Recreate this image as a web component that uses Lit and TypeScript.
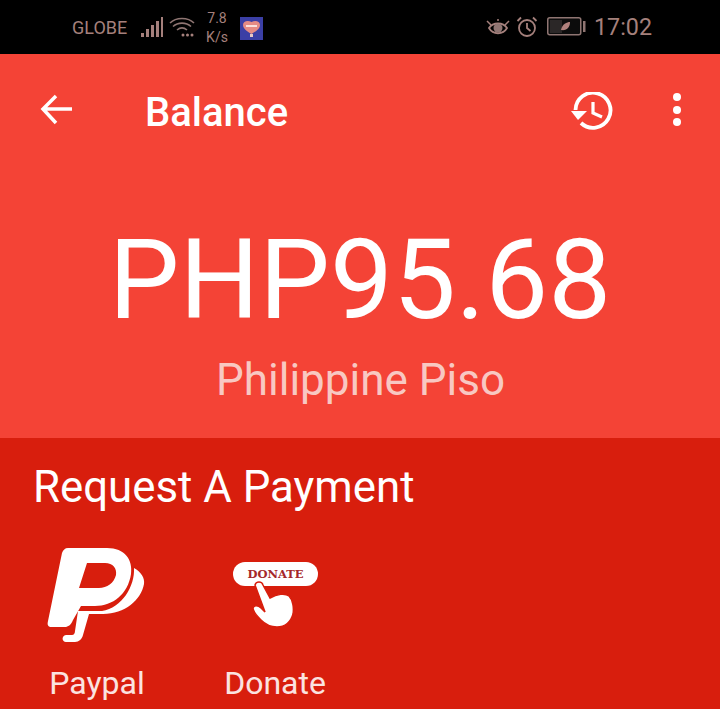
import { LitElement, html, css } from "lit";
import { customElement } from "lit/decorators.js";

@customElement("app-root")
export class AppRoot extends LitElement {
  static styles = css`
    :host { display: block; width: 720px; height: 709px; overflow: hidden; font-family: Roboto, "Liberation Sans", sans-serif; background: #d81e0d; }
    .status { height: 54px; background: #000; color: #a5807c; display: flex; align-items: center; box-sizing: border-box; padding-left: 72px; font-size: 18px; }
    .carrier { width: 57px; }
    .signal { margin-left: 12px; }
    .wifi { margin-left: 5px; }
    .speed { margin-left: 9px; margin-top: 2px; width: 26px; font-size: 14px; line-height: 19px; text-align: center; }
    .app { margin-left: 10px; margin-top: 3px; }
    .right { margin-left: auto; display: flex; align-items: center; padding-right: 68px; }
    .alarm { margin-left: 6px; }
    .battery { margin-left: 9px; }
    .time { margin-left: 8px; font-size: 23.3px; }
    .top { background: #f44336; height: 384px; color: #fff; display: flex; flex-direction: column; }
    .toolbar { display: flex; align-items: center; height: 116px; padding: 0 36px 0 38px; }
    .toolbar h1 { margin: 0 0 0 71px; font-size: 40px; font-weight: 500; flex: 1; }
    .dots { margin-left: 56px; }
    .amount { text-align: center; font-size: 112px; line-height: 124px; margin-top: 48px; }
    .currency { text-align: center; font-size: 44px; line-height: 48px; color: #f8c8c2; margin-top: 14px; padding-left: 1px; }
    .bottom { color: #fff; padding: 24px 0 0 33px; }
    .bottom h2 { margin: 0; font-size: 43.8px; font-weight: 400; line-height: 50px; }
    .methods { display: flex; margin-top: 36px; padding-left: 1px; }
    .method { display: flex; flex-direction: column; align-items: center; font-size: 32px; color: #fbe3e0; line-height: 36px; }
    .method svg { display: block; margin-bottom: 17px; overflow: visible; }
    .m1 { width: 126px; }
    .m2 { width: 100px; margin-left: 65px; }
    .tag { font-family: "DejaVu Serif", serif; font-weight: 700; font-size: 11.5px; fill: #a5282a; }
  `;

  render() {
    return html`
      <div class="status">
        <span class="carrier">GLOBE</span>
        <svg class="signal" width="23" height="22" viewBox="0 0 23 22" fill="#a5807c"><rect x="0" y="17" width="3" height="4"/><rect x="5" y="13" width="3" height="8"/><rect x="10" y="9" width="3" height="12"/><rect x="15" y="5" width="3" height="16"/><rect x="20" y="1" width="2" height="20"/></svg>
        <svg class="wifi" width="26" height="22" viewBox="0 0 26 22" fill="none" stroke="#8f7572" stroke-width="1.6"><path d="M1 7 C7 1 19 1 25 7"/><path d="M4 10.500 C9 6 17 6 22 10.500"/><path d="M8 14 C11 11.500 15 11.500 18 14"/><circle cx="14" cy="19" r="1.500" fill="#a5807c" stroke="none"/><circle cx="18.500" cy="19" r="1.500" fill="#a5807c" stroke="none"/><circle cx="23" cy="19" r="1.500" fill="#a5807c" stroke="none"/></svg>
        <span class="speed">7.8<br />K/s</span>
        <svg class="app" width="23" height="23" viewBox="0 0 23 23"><rect width="23" height="23" fill="#3b3fa5"/><path d="M3 8 C3 4 8 3 11.500 5 C15 3 20 4 20 8 C20 12 15 15 11.500 17 C8 15 3 12 3 8 Z" fill="#e58b84"/><rect x="10" y="17" width="3" height="3" fill="#e8c8c4"/><path d="M6 9 H17" stroke="#fbe0dc" stroke-width="2"/></svg>
        <div class="right">
          <svg width="24" height="22" viewBox="0 0 24 22" fill="none" stroke="#a5807c" stroke-width="1.800"><path d="M3 12 C7 6 17 6 21 12 C17 19 7 19 3 12 Z"/><circle cx="12" cy="12" r="4.500" fill="#8f7572" stroke="none"/><path d="M1 5 L5 9 M23 5 L19 9 M12 3 V5" stroke-width="1.500"/></svg>
          <svg class="alarm" width="22" height="22" viewBox="0 0 22 22" fill="none" stroke="#a5807c" stroke-width="1.800"><circle cx="11" cy="12" r="8"/><path d="M11 7 V12 L14.500 15"/><path d="M1.500 5 L5 1.500 M20.500 5 L17 1.500"/></svg>
          <svg class="battery" width="39" height="20" viewBox="0 0 39 20"><rect x=".75" y=".75" width="33" height="17" rx="2" fill="#0c0c0c" stroke="#8f7572" stroke-width="1.500"/><rect x="3" y="3" width="12" height="13" fill="#2b2727"/><path d="M14 13 C15 7 20 5 23 5 C23 10 20 14 14 13 Z" fill="#b0807c"/><rect x="36" y="4" width="2.500" height="11" fill="#8f7572"/></svg>
          <span class="time">17:02</span>
        </div>
      </div>
      <div class="top">
        <div class="toolbar">
          <svg width="36" height="36" viewBox="0 0 36 36" fill="none" stroke="#fff" stroke-width="3.500"><path d="M34 15 H5 M18 2 L5 15 L18 29"/></svg>
          <h1>Balance</h1>
          <svg width="44" height="40" viewBox="0 0 44 40" fill="none" stroke="#fff"><path d="M5.500 18 A17.500 17.500 0 1 1 11 31" stroke-width="3.800"/><path d="M1 19 H17 L8 28 Z" fill="#fff" stroke="none"/><path d="M23 10 V21 L32 25" stroke-width="3.200"/></svg>
          <svg class="dots" width="14" height="40" viewBox="0 0 14 40" fill="#fff"><circle cx="7" cy="5" r="4"/><circle cx="7" cy="18" r="4"/><circle cx="7" cy="30" r="4"/></svg>
        </div>
        <div class="amount">PHP95.68</div>
        <div class="currency">Philippine Piso</div>
      </div>
      <div class="bottom">
        <h2>Request A Payment</h2>
        <div class="methods">
          <div class="method m1">
            <svg width="100" height="100" viewBox="0 0 100 100" fill="#fff"><path fill-rule="evenodd" d="M21 0 H60 C78 0 86 12 84 26 C81 46 66 58 48 58 H34 L26 72 C24 77 21 79 18 79 H5 C1 79 0 77 1 73 L15 5 C16 2 18 0 21 0 Z M40 15 H58 C66 15 70 20 69 27 C67 35 60 40 52 40 H32 Z"/><path d="M87 20 C94 24 98 30 97 36 C94 52 78 66 56 66 H42 L36 87 C35 91 32 94 28 94 H19 C15 94 14 88 19 87 H25 C27 87 28 85 28 83 L31 63 H55 C75 60 88 38 87 20 Z"/></svg>
            Paypal
          </div>
          <div class="method m2">
            <svg width="100" height="100" viewBox="0 0 100 100"><rect x="8" y="14" width="85" height="24" rx="12" fill="#fff"/><text class="tag" x="50.500" y="30" text-anchor="middle">DONATE</text><path fill="#fff" stroke="#d81e0d" stroke-width="1.500" d="M30 37 C31 33 37 33 38 37 L45 50 C52 46 60 45 64 48 C68 52 69 60 68 66 C66 74 60 79 52 79 C45 79 40 76 36 72 C32 68 28 64 28 60 C29 57 33 57 36 60 L40 64 Z"/></svg>
            Donate
          </div>
        </div>
      </div>
    `;
  }
}
